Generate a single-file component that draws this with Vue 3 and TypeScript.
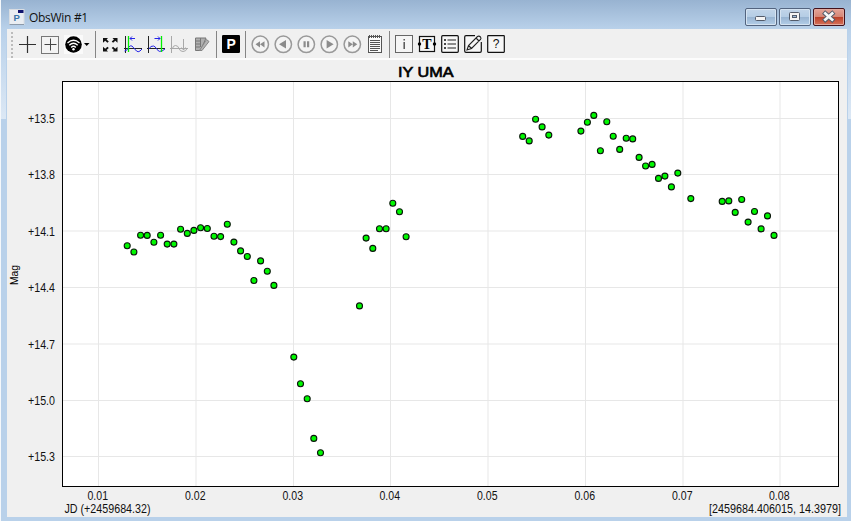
<script setup lang="ts">
interface Tick {
  pos: number
  label: string
}

const xTicks: Tick[] = [
  { pos: 98.5, label: '0.01' },
  { pos: 196, label: '0.02' },
  { pos: 293.5, label: '0.03' },
  { pos: 390.5, label: '0.04' },
  { pos: 488, label: '0.05' },
  { pos: 585.5, label: '0.06' },
  { pos: 683, label: '0.07' },
  { pos: 780, label: '0.08' },
]

const yTicks: Tick[] = [
  { pos: 118.5, label: '+13.5' },
  { pos: 174.5, label: '+13.8' },
  { pos: 231, label: '+14.1' },
  { pos: 287.5, label: '+14.4' },
  { pos: 344, label: '+14.7' },
  { pos: 400.5, label: '+15.0' },
  { pos: 456.5, label: '+15.3' },
]

const points: [number, number][] = [
  [127.2, 245.8], [133.9, 252], [140.6, 235.2], [147.2, 235.4], [153.9, 242.2], [160.6, 235.2],
  [167.2, 244.1], [173.9, 244.1], [180.6, 229.2], [187.3, 233.4], [193.9, 230.4], [200.6, 227.8],
  [207.3, 228.5], [214, 236.2], [220.6, 236.6], [227.3, 224.2], [233.9, 242.1], [240.6, 250.9],
  [247.3, 256.5], [253.9, 280.5], [260.6, 260.9], [267.3, 271.3], [273.9, 285.4],
  [293.8, 357.1], [300.5, 383.8], [307.2, 398.8], [313.8, 438.4], [320.5, 452.8],
  [359.5, 305.9], [366.1, 238.1], [372.8, 248.4], [379.5, 228.8], [386.1, 228.8], [392.8, 203.3],
  [399.5, 211.8], [406.1, 236.8],
  [522.7, 136.4], [529.2, 140.9], [535.6, 119.3], [542.1, 126.9], [548.8, 135.1],
  [580.9, 131.1], [587.4, 122.2], [593.8, 115.4], [600.4, 150.7], [606.8, 121.7], [613.2, 136.2],
  [619.7, 149.4], [626.2, 138.2], [632.7, 138.9], [639.1, 157.4], [645.6, 166], [652.1, 164.4],
  [658.5, 178.4], [664.9, 176.1], [671.4, 186.9], [677.8, 173.1], [690.8, 198.6],
  [722.2, 201.4], [728.8, 200.9], [735.2, 212.4], [741.7, 199.5], [748.1, 222.1], [754.5, 211.5],
  [761.1, 228.9], [767.5, 215.9], [774, 235.4],
]
</script>

<template>
  <div class="window">
    <header class="titlebar">
      <svg class="app-icon" width="16" height="16" viewBox="0 0 16 16">
        <rect x="0.5" y="0.5" width="14.5" height="15" fill="#e9edf2" stroke="#d9dde2" />
        <path d="M0.5 15.5H15" stroke="#8c9aaa" />
        <rect x="9" y="1" width="5.5" height="3" fill="#10146e" />
        <text x="4.6" y="12.2" class="app-letter">P</text>
      </svg>
      <span class="title">ObsWin #1</span>
      <div class="controls">
        <button class="control">
          <svg width="30" height="16" viewBox="0 0 30 16">
            <rect x="9.5" y="7.5" width="10" height="4" rx="1" fill="#f4f4f4" stroke="#535b6a" />
          </svg>
        </button>
        <button class="control">
          <svg width="30" height="16" viewBox="0 0 30 16">
            <rect x="9.5" y="3.5" width="10" height="8" rx="1" fill="#f4f4f4" stroke="#535b6a" />
            <rect x="12.5" y="6.5" width="4" height="2" fill="#9fbddd" stroke="#535b6a" />
          </svg>
        </button>
        <button class="control close">
          <svg width="30" height="16" viewBox="0 0 30 16">
            <path d="M11.3 4.5L18.2 10.7M18.2 4.5L11.3 10.7" stroke="#535b6a" stroke-width="4.6" stroke-linecap="square" />
            <path d="M11.3 4.5L18.2 10.7M18.2 4.5L11.3 10.7" stroke="#f6f6f6" stroke-width="2.7" stroke-linecap="square" />
          </svg>
        </button>
      </div>
    </header>

    <main class="content">
      <nav class="toolbar">
        <span class="grip"></span>
        <svg class="tool" viewBox="0 0 23 23"><path d="M3 11.5H20M11.5 3V20" stroke="#303030" stroke-width="1.2" /></svg>
        <svg class="tool" viewBox="0 0 23 23">
          <rect x="2.5" y="3.5" width="17" height="17" fill="#f3f3f3" stroke="#777" />
          <path d="M5.5 11.5H17.5M11.5 5.5V17.5" stroke="#444" />
        </svg>
        <svg class="tool" viewBox="0 0 23 23">
          <rect x="2" y="2" width="19" height="19" fill="#fafafa" />
          <circle cx="11.5" cy="11.5" r="8.3" fill="#000" />
          <g fill="none" stroke="#fff" stroke-width="1.4">
            <path d="M5.5 10Q11.5 4.6 17.5 10" />
            <path d="M7.3 12.3Q11.5 8.4 15.7 12.3" />
            <path d="M9.2 14.4Q11.5 12.2 13.8 14.4" />
          </g>
          <circle cx="11.5" cy="16.2" r="1.2" fill="#fff" />
        </svg>
        <svg class="drop" viewBox="0 0 8 23"><path d="M-1 10H4.5L1.7 13Z" fill="#000" /></svg>
        <span class="sep"></span>
        <svg class="tool" viewBox="0 0 23 23">
          <g fill="#111">
            <path d="M4 5H9L7.6 6.4L9.8 8.4L8.4 9.8L6.2 7.8L4 9.7Z" />
            <path d="M18.5 5H13.5L14.9 6.4L12.7 8.4L14.1 9.8L16.3 7.8L18.5 9.7Z" />
            <path d="M4 18.5H9L7.6 17.1L9.8 15.1L8.4 13.7L6.2 15.7L4 13.8Z" />
            <path d="M18.5 18.5H13.5L14.9 17.1L12.7 15.1L14.1 13.7L16.3 15.7L18.5 13.8Z" />
          </g>
        </svg>
        <svg class="tool" viewBox="0 0 23 23">
          <path d="M3.5 3V20M2 15.5H20" stroke="#222" fill="none" />
          <path d="M2.5 18Q5 18 6.5 14.5Q8 12 10 13L14.5 18Q16 19.5 18 18L20 16" stroke="#2424e8" fill="none" />
          <path d="M6.5 3V19" stroke="#00f000" stroke-width="1.3" />
          <path d="M8 5.5H13M10 3.5L8 5.5L10 7.5" stroke="#2424e8" fill="none" />
        </svg>
        <svg class="tool" viewBox="0 0 23 23">
          <path d="M3.5 3V20M2 15.5H20" stroke="#222" fill="none" />
          <path d="M4 16Q5.5 12.5 8.5 13Q10 13 12 16.5Q14 19.5 17 18L20 16" stroke="#2424e8" fill="none" />
          <path d="M16.5 3V19" stroke="#00f000" stroke-width="1.3" />
          <path d="M9.5 5.5H15M13 3.5L15 5.5L13 7.5" stroke="#2424e8" fill="none" />
        </svg>
        <svg class="tool" viewBox="0 0 23 23">
          <path d="M3.5 3V20M2 15.5H20M4.5 15.5Q5 12.5 7.5 12.5Q10 12.5 11 15.5Q12 18.5 15 18.5Q18 18.5 19 15.5M15.5 6V17M13.5 14.5L15.5 17L17.5 14.5" stroke="#a8a8a8" fill="none" />
        </svg>
        <svg class="tool" viewBox="0 0 23 23">
          <path d="M4.5 5H15L9.5 17.5H4.5Z" fill="#b0b0b0" stroke="#777" />
          <path d="M9.5 5V14" stroke="#777" />
          <path d="M8.5 17.5L15.5 6.5L18 8.5L11 17.5Z" fill="#b4b4b4" stroke="#858585" />
          <path d="M5 8H9M5 11H9M5 14H9" stroke="#777" />
        </svg>
        <span class="sep"></span>
        <svg class="tool" viewBox="0 0 23 23">
          <rect x="2" y="2" width="18" height="18" rx="1.2" fill="#000" />
          <text x="6.5" y="16" class="p-letter">P</text>
        </svg>
        <span class="sep"></span>
        <svg class="tool media" viewBox="0 0 23 23">
          <circle cx="11.3" cy="11.3" r="8.2" />
          <path d="M11 8.2V14.4L6.5 11.3ZM15.5 8.2V14.4L11 11.3Z" />
        </svg>
        <svg class="tool media" viewBox="0 0 23 23">
          <circle cx="11.3" cy="11.3" r="8.2" />
          <path d="M14 7V15.6L7 11.3Z" />
        </svg>
        <svg class="tool media" viewBox="0 0 23 23">
          <circle cx="11.3" cy="11.3" r="8.2" />
          <path d="M8.5 8.3H10.7V14.3H8.5ZM12 8.3H14.2V14.3H12Z" />
        </svg>
        <svg class="tool media" viewBox="0 0 23 23">
          <circle cx="11.3" cy="11.3" r="8.2" />
          <path d="M8.6 7V15.6L15.6 11.3Z" />
        </svg>
        <svg class="tool media" viewBox="0 0 23 23">
          <circle cx="11.3" cy="11.3" r="8.2" />
          <path d="M7.3 8.2V14.4L11.8 11.3ZM11.8 8.2V14.4L16.3 11.3Z" />
        </svg>
        <svg class="tool" viewBox="0 0 23 23">
          <rect x="4.5" y="3.5" width="13" height="16" fill="#fafafa" stroke="#555" />
          <path d="M5.5 2V5M7.5 2V5M9.5 2V5M11.5 2V5M13.5 2V5M15.5 2V5" stroke="#555" />
          <path d="M6 7.5H16M6 9.5H16M6 11.5H16M6 13.5H16M6 15.5H16M6 17.5H14" stroke="#555" />
        </svg>
        <span class="sep"></span>
        <svg class="tool" viewBox="0 0 23 23">
          <rect x="2.5" y="2.5" width="17" height="17" fill="#f5f5f5" stroke="#666" />
          <path d="M11.2 6V7.5M11.2 9V16" stroke="#555" stroke-width="1.5" />
        </svg>
        <svg class="tool" viewBox="0 0 23 23">
          <rect x="3.5" y="3.5" width="15" height="15" fill="#f7f7f7" stroke="#111" stroke-width="1.2" />
          <circle cx="3.5" cy="11" r="1.7" /><circle cx="18.5" cy="11" r="1.7" />
          <text x="6.2" y="16" class="t-letter">T</text>
        </svg>
        <svg class="tool" viewBox="0 0 23 23">
          <rect x="2.7" y="2.7" width="16.6" height="16.6" rx="1" fill="#f7f7f7" stroke="#111" stroke-width="1.2" />
          <path d="M5 7H7M5 11H7M5 15H7" stroke="#111" stroke-width="1.7" />
          <path d="M8.5 7H17M8.5 11H17M8.5 15H17" stroke="#222" stroke-width="1.2" />
        </svg>
        <svg class="tool" viewBox="0 0 23 23">
          <path d="M13 2.7H4Q2.7 2.7 2.7 4V18Q2.7 19.3 4 19.3H18Q19.3 19.3 19.3 18V9" fill="#f7f7f7" stroke="#111" stroke-width="1.2" />
          <path d="M5 17L6.5 12.5L15.5 3.5Q17 2.5 18.5 4Q19.5 5.3 18.5 6.5L9.5 15.5ZM14 5L17 8M6.5 12.5L9.5 15.5" fill="#f7f7f7" stroke="#222" stroke-width="1.1" />
        </svg>
        <svg class="tool" viewBox="0 0 23 23">
          <rect x="2.7" y="2.7" width="16.6" height="16.6" rx=".5" fill="#f7f7f7" stroke="#111" stroke-width="1.2" />
          <text x="7.8" y="15.3" class="q-letter">?</text>
        </svg>
      </nav>

      <svg class="chart" viewBox="7 60 840 457">
        <text x="398" y="77" class="chart-title" textLength="55.5" lengthAdjust="spacingAndGlyphs">IY UMA</text>
        <rect x="62.5" y="81.5" width="776" height="405" fill="#fff" />
        <line v-for="t in xTicks" :key="t.label" :x1="t.pos" :x2="t.pos" y1="82" y2="486" class="grid" />
        <line v-for="t in yTicks" :key="t.label" :y1="t.pos" :y2="t.pos" x1="63" x2="838" class="grid" />
        <rect x="62.5" y="81.5" width="776" height="405" fill="none" stroke="#000" />
        <text v-for="t in yTicks" :key="t.label" x="28" :y="Math.floor(t.pos) + 5" class="label" textLength="27" lengthAdjust="spacingAndGlyphs">{{ t.label }}</text>
        <text v-for="t in xTicks" :key="t.label" :x="t.pos - 11" y="500" class="label" textLength="20.5" lengthAdjust="spacingAndGlyphs">{{ t.label }}</text>
        <text x="64.5" y="513" class="label" textLength="86" lengthAdjust="spacingAndGlyphs">JD (+2459684.32)</text>
        <text transform="translate(709 513) scale(0.9 1)" class="label">[2459684.406015, 14.3979]</text>
        <text transform="translate(18 285) rotate(-90)" class="axis" textLength="20" lengthAdjust="spacingAndGlyphs">Mag</text>
        <circle v-for="(p, i) in points" :key="i" :cx="p[0]" :cy="p[1]" r="3" class="point" />
      </svg>
    </main>
  </div>
</template>

<style>
body {
  margin: 0;
  overflow: hidden;
}
</style>

<style scoped>
.window {
  box-sizing: border-box;
  width: 851px;
  height: 521px;
  padding: 0 4px 4px 7px;
  background:
    linear-gradient(#f5f8fb, #f5f8fb) 0 0 / 1px 100% no-repeat,
    linear-gradient(to bottom, #b9d1ea, #dce8f5) 1px 29px / 5px 90px no-repeat,
    linear-gradient(to bottom, #b9d1ea, #dce8f5) 848px 29px / 3px 90px no-repeat,
    linear-gradient(to bottom, #98b3d1, #b9d1ea 29px);
  font-family: "Liberation Sans", Arial, sans-serif;
}
.titlebar {
  display: flex;
  height: 29px;
  box-sizing: border-box;
  padding: 8px 2px 0 2px;
}
.app-icon {
  display: block;
  margin-top: 1px;
}
.app-letter {
  font: bold 9.5px "Liberation Sans", Arial, sans-serif;
  fill: #3774a8;
}
.title {
  margin-left: 4px;
  margin-top: 2px;
  font: 12px/16px "Open Sans", "Noto Sans", sans-serif;
  letter-spacing: -0.3px;
  color: #111;
}
.controls {
  display: flex;
  gap: 2px;
  margin-left: auto;
}
.control {
  display: block;
  box-sizing: border-box;
  width: 32px;
  height: 18px;
  padding: 0;
  border: 1px solid #53647f;
  border-radius: 2px;
  background: linear-gradient(#c2d5e9 0, #b5cde5 47%, #96b2d0 48%, #b3cee8 100%);
  box-shadow: inset 0 0 0 1px #d5e3f1;
}
.control svg {
  display: block;
}
.close {
  border-color: #43121c;
  background: linear-gradient(#e4a398 0, #d58777 47%, #b93c25 48%, #d6735c 100%);
  box-shadow: inset 0 0 0 1px #e2a99d;
}
.content {
  width: 840px;
  height: 488px;
  background: #f0f0f0;
}
.toolbar {
  box-sizing: border-box;
  display: flex;
  align-items: center;
  height: 31px;
  padding-left: 4px;
  background: linear-gradient(to bottom, #f0f0f0 29px, #fcfcfc 29px);
}
.grip {
  width: 2px;
  height: 26px;
  margin-right: 3px;
  background: repeating-linear-gradient(to bottom, #bcbcbc 0 2px, transparent 2px 4px);
}
.tool {
  display: block;
  flex: none;
  width: 23px;
  height: 23px;
}
.drop {
  display: block;
  flex: none;
  width: 8px;
  height: 23px;
  overflow: visible;
}
.sep {
  flex: none;
  width: 1px;
  height: 27px;
  margin: 0 3px 0 2px;
  background: #858585;
}
.media circle {
  fill: #f4f4f4;
  stroke: #999;
  stroke-width: 1.5;
}
.media path {
  fill: #8c8c8c;
}
.p-letter {
  font: bold 14px "Liberation Sans", Arial, sans-serif;
  fill: #fff;
}
.t-letter {
  font: bold 14px "Liberation Serif", serif;
  fill: #000;
}
.q-letter {
  font: 12px "Liberation Sans", Arial, sans-serif;
  fill: #111;
}
.chart {
  display: block;
  width: 840px;
  height: 457px;
}
.chart-title {
  font-size: 15.5px;
  fill: #000;
  stroke: #000;
  stroke-width: 0.7;
}
.grid {
  stroke: #e7e7e7;
  stroke-width: 1;
}
.label {
  font-size: 12px;
  fill: #111;
}
.axis {
  font-size: 10px;
  fill: #000;
}
.point {
  fill: #00f800;
  stroke: #0a140a;
  stroke-width: 1.1;
}
</style>
